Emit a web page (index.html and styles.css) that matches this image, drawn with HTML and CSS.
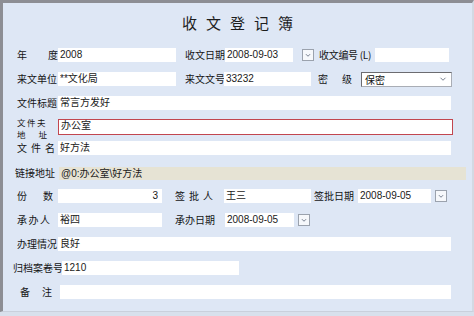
FILE: index.html
```html
<!DOCTYPE html>
<html lang="zh-CN">
<head>
    <meta charset="UTF-8">
    <meta name="viewport" content="width=device-width, initial-scale=1.0">
    <title>收文登记簿</title>
    <link rel="stylesheet" href="styles.css">
</head>
<body>

    <div class="sheet">
        <div class="title">收文登记簿</div>

        <div class="form">
            <!-- 年度 / 收文日期 / 收文编号 -->
            <div class="row">
                <label class="lbl lbl-spread w41"><span>年</span><span>度</span></label>
                <input class="field w118" type="text" value="2008">
                <label class="lbl ml9 w40">收文日期</label>
                <input class="field w68" type="text" value="2008-09-03">
                <button class="pick ml9" type="button"><svg viewBox="0 0 12 12"><path d="M3.5 5 L6 7.5 L8.5 5" /></svg></button>
                <label class="lbl lbl-code ml5 w56">收文编号 (L)</label>
                <input class="field w74" type="text" value="">
            </div>

            <!-- 来文单位 / 来文文号 / 密级 -->
            <div class="row">
                <label class="lbl w41">来文单位</label>
                <input class="field w118" type="text" value="**文化局">
                <label class="lbl ml9 w39">来文文号</label>
                <input class="field w87" type="text" value="33232">
                <label class="lbl lbl-spread ml7 w34"><span>密</span><span>级</span></label>
                <div class="select ml9 w91">
                    <span>保密</span>
                    <svg viewBox="0 0 12 12"><path d="M3 4.5 L6 7.5 L9 4.5" /></svg>
                </div>
            </div>

            <div class="row">
                <label class="lbl w41">文件标题</label>
                <input class="field w393" type="text" value="常言方发好">
            </div>

            <div class="row row-tall">
                <label class="lbl lbl-two w41">
                    <span class="lbl-wide">文件夫</span>
                    <span class="lbl-spread w30"><span>地</span><span>址</span></span>
                </label>
                <div class="field field-red w395">办公室</div>
            </div>

            <div class="row row-up">
                <label class="lbl lbl-spread w41 pr3"><span>文</span><span>件</span><span>名</span></label>
                <input class="field w393" type="text" value="好方法">
            </div>

            <div class="row row-link">
                <label class="lbl ml-2 w44">链接地址</label>
                <div class="field field-link w407">@0:办公室\好方法</div>
            </div>

            <!-- 份数 / 签批人 / 签批日期 -->
            <div class="row">
                <label class="lbl lbl-spread w41 pr5"><span>份</span><span>数</span></label>
                <input class="field field-num w104" type="text" value="3">
                <label class="lbl lbl-spread ml13 w38"><span>签</span><span>批</span><span>人</span></label>
                <input class="field ml11 w87" type="text" value="王三">
                <label class="lbl ml3 w44">签批日期</label>
                <input class="field w73" type="text" value="2008-09-05">
                <button class="pick ml4" type="button"><svg viewBox="0 0 12 12"><path d="M3.5 5 L6 7.5 L8.5 5" /></svg></button>
            </div>

            <!-- 承办人 / 承办日期 -->
            <div class="row">
                <label class="lbl lbl-spread w41 pr8"><span>承</span><span>办</span><span>人</span></label>
                <input class="field w104" type="text" value="裕四">
                <label class="lbl ml13 w50">承办日期</label>
                <input class="field w69" type="text" value="2008-09-05">
                <button class="pick ml4" type="button"><svg viewBox="0 0 12 12"><path d="M3.5 5 L6 7.5 L8.5 5" /></svg></button>
            </div>

            <div class="row">
                <label class="lbl w41">办理情况</label>
                <input class="field w393" type="text" value="良好">
            </div>

            <div class="row">
                <label class="lbl ml-4 w49">归档案卷号</label>
                <input class="field w177" type="text" value="1210">
            </div>

            <div class="row">
                <label class="lbl lbl-spread ml3 w40 pr8"><span>备</span><span>注</span></label>
                <input class="field w391" type="text" value="">
            </div>
        </div>
    </div>

</body>
</html>
```

FILE: styles.css
```css
html, body {
    margin: 0;
    padding: 0;
}

body {
    width: 474px;
    height: 316px;
    overflow: hidden;
    background: #d8e0ec;
    font-family: "Liberation Sans", "Noto Sans CJK SC", sans-serif;
    color: #111;
}

/* Formular-Rahmen: oben und links grau */
.sheet {
    box-sizing: border-box;
    width: 474px;
    height: 312px;
    background: #dee7f5;
    border-top: 3px solid #8d8e94;
    border-left: 3px solid #8d8e94;
    border-right: 2px solid #d3d9e3;
    border-bottom: 1px solid #c9d0dc;
}

.title {
    padding: 12px 0 0 9px;
    height: 25px;
    text-align: center;
    font-family: "Noto Sans CJK SC", sans-serif;
    font-size: 15px;
    line-height: 16px;
    letter-spacing: 9px;
    color: #1d1d1d;
}

.form {
    padding: 3px 0 0 14px;
}

.row {
    display: flex;
    align-items: center;
    height: 24px;
}

.row-tall {
    height: 24px;
}

.row-up {
    margin-top: -3px;
}

.row-link {
    margin-top: 2px;
    height: 22px;
}

/* Beschriftungen */
.lbl {
    flex: none;
    box-sizing: border-box;
    font-family: "Noto Sans CJK SC", sans-serif;
    font-size: 10px;
    line-height: 12px;
    white-space: nowrap;
    color: #151515;
}

.lbl-spread {
    display: flex;
    justify-content: space-between;
}

.lbl-code {
    letter-spacing: -0.3px;
}

.lbl-two {
    display: flex;
    flex-direction: column;
    font-size: 8.5px;
    line-height: 12px;
    padding-top: 1px;
}

.lbl-wide {
    letter-spacing: 1.5px;
}

/* Eingabefelder */
.field {
    flex: none;
    box-sizing: border-box;
    height: 14px;
    margin: 0;
    padding: 0 1px 0 2px;
    border: none;
    background: #fff;
    font-family: "Liberation Sans", "Noto Sans CJK SC", sans-serif;
    font-size: 10px;
    line-height: 14px;
    color: #1a1a1a;
    outline: none;
}

.field-red {
    height: 16px;
    border: 1px solid #c2464f;
    line-height: 12px;
    padding-left: 2px;
}

.field-link {
    background: #e6e3d4;
    height: 13px;
    line-height: 13px;
    padding-left: 2px;
}

.field-num {
    text-align: right;
    padding-right: 4px;
}

.select {
    flex: none;
    box-sizing: border-box;
    display: flex;
    align-items: center;
    justify-content: space-between;
    height: 15px;
    padding: 0 3px 0 3px;
    background: #fff;
    border: 1px solid #6c6c70;
    border-right-color: #a9adb5;
    border-bottom-color: #a9adb5;
    font-family: "Noto Sans CJK SC", sans-serif;
    font-size: 10px;
}

.select svg {
    width: 10px;
    height: 10px;
}

.select path,
.pick path {
    fill: none;
    stroke: #6b7587;
    stroke-width: 1.1;
}

/* Datums-Knopf */
.pick {
    flex: none;
    box-sizing: border-box;
    width: 12px;
    height: 12px;
    padding: 0;
    border: 1px solid #9ba2ad;
    background: #f6f8fb;
}

.pick svg {
    display: block;
    width: 10px;
    height: 10px;
}

/* Breiten und Abstände */
.w30 { width: 30px; }
.w34 { width: 34px; }
.w38 { width: 38px; }
.w39 { width: 39px; }
.w40 { width: 40px; }
.w41 { width: 41px; }
.w44 { width: 44px; }
.w49 { width: 49px; }
.w50 { width: 50px; }
.w56 { width: 56px; }
.w68 { width: 68px; }
.w69 { width: 69px; }
.w73 { width: 73px; }
.w74 { width: 74px; }
.w87 { width: 87px; }
.w91 { width: 91px; }
.w104 { width: 104px; }
.w118 { width: 118px; }
.w177 { width: 177px; }
.w391 { width: 391px; }
.w393 { width: 393px; }
.w395 { width: 395px; }
.w407 { width: 407px; }

.ml-4 { margin-left: -4px; }
.ml-2 { margin-left: -2px; }
.ml3 { margin-left: 3px; }
.ml4 { margin-left: 4px; }
.ml5 { margin-left: 5px; }
.ml7 { margin-left: 7px; }
.ml9 { margin-left: 9px; }
.ml11 { margin-left: 11px; }
.ml13 { margin-left: 13px; }

.pr3 { padding-right: 3px; }
.pr5 { padding-right: 5px; }
.pr8 { padding-right: 8px; }
```
